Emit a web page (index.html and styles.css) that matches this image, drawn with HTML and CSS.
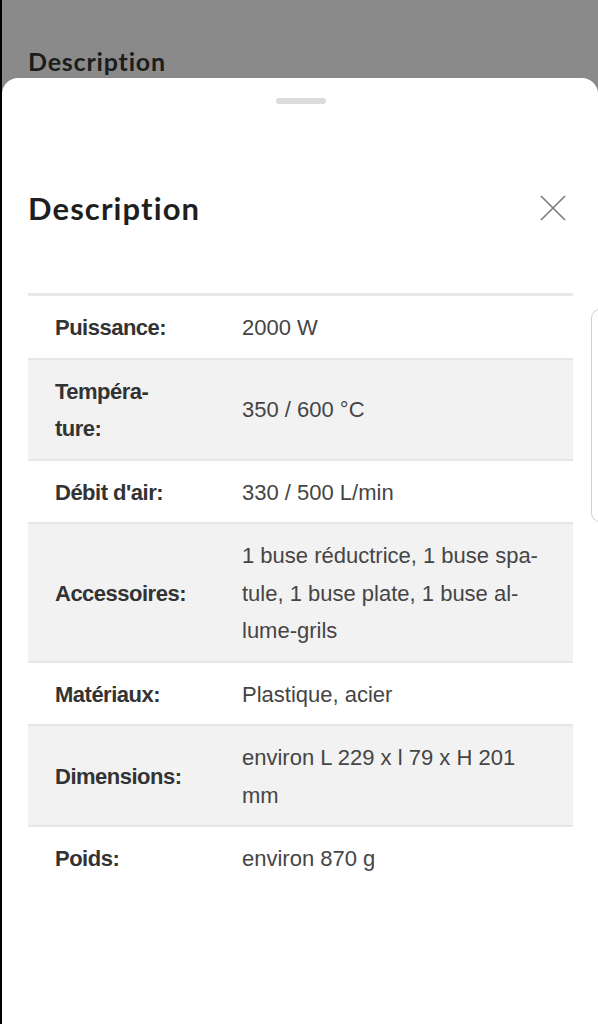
FILE: index.html
```html
<!DOCTYPE html>
<html lang="fr">
<head>
<meta charset="utf-8">
<title>Description</title>
<link rel="stylesheet" href="styles.css">
</head>
<body>
<div class="backdrop-title">Description</div>
<section class="sheet">
  <div class="handle"></div>
  <header class="sheet-head">
    <h2 class="sheet-title">Description</h2>
    <button class="close" aria-label="Fermer">
      <svg width="26" height="26" viewBox="0 0 26 26"><path d="M1 1 L25 25 M25 1 L1 25" stroke="#7a7a7a" stroke-width="1.6" fill="none"/></svg>
    </button>
  </header>
  <div class="specs">
    <div class="row"><div class="label">Puissance:</div><div class="value">2000 W</div></div>
    <div class="row alt"><div class="label">Tempéra-<br>ture:</div><div class="value">350 / 600 °C</div></div>
    <div class="row"><div class="label">Débit d'air:</div><div class="value">330 / 500 L/min</div></div>
    <div class="row alt"><div class="label">Accessoires:</div><div class="value">1 buse réductrice, 1 buse spa-<br>tule, 1 buse plate, 1 buse al-<br>lume-grils</div></div>
    <div class="row"><div class="label">Matériaux:</div><div class="value">Plastique, acier</div></div>
    <div class="row alt"><div class="label">Dimensions:</div><div class="value">environ L 229 x l 79 x H 201<br>mm</div></div>
    <div class="row last"><div class="label">Poids:</div><div class="value">environ 870 g</div></div>
  </div>
</section>
<div class="side-tab"></div>
</body>
</html>
```
FILE: styles.css
```css
html, body {
  margin: 0;
  padding: 0;
}
body {
  background: #8a8a8a;
  border-left: 2px solid #000;
  min-height: 1024px;
  box-sizing: border-box;
  font-family: "Liberation Sans", Arial, sans-serif;
  position: relative;
  overflow: hidden;
}
.backdrop-title {
  height: 78px;
  box-sizing: border-box;
  padding: 47px 0 0 26px;
  font-family: Lato, "Liberation Sans", sans-serif;
  font-weight: 700;
  font-size: 25px;
  letter-spacing: 0.8px;
  line-height: 28px;
  color: #1c1c1c;
}
.sheet {
  background: #fff;
  border-radius: 16px 16px 0 0;
  min-height: 946px;
  box-sizing: border-box;
  padding: 20px 25px 0 26px;
}
.handle {
  width: 50px;
  height: 6px;
  border-radius: 3px;
  background: #dcdcdc;
  margin: 0 auto;
}
.sheet-head {
  display: flex;
  align-items: center;
  justify-content: space-between;
  margin-top: 86px;
  height: 36px;
}
.sheet-title {
  margin: 0;
  font-family: Lato, "Liberation Sans", sans-serif;
  font-weight: 700;
  font-size: 31px;
  letter-spacing: 1.1px;
  line-height: 36px;
  color: #1f1f1f;
}
.close {
  border: 0;
  background: none;
  padding: 0;
  margin-right: 7px;
  width: 26px;
  height: 26px;
  display: flex;
}
.specs {
  margin-top: 67px;
  border-top: 3px solid #e8e8e8;
}
.row {
  display: grid;
  grid-template-columns: 214px 1fr;
  align-items: center;
  padding: 13px 0 11px;
  border-bottom: 2px solid #e6e6e6;
  font-size: 22px;
  line-height: 37.5px;
}
.row.alt {
  background: #f2f2f3;
}
.row.last {
  border-bottom: 0;
}
.label {
  padding-left: 27px;
  font-weight: 700;
  letter-spacing: -0.5px;
  color: #333;
}
.value {
  color: #454545;
  padding-right: 16px;
}
.side-tab {
  position: absolute;
  left: 589px;
  top: 309px;
  width: 20px;
  height: 211px;
  border: 1px solid #cfcfcf;
  border-radius: 9px;
  background: #fff;
}
```
